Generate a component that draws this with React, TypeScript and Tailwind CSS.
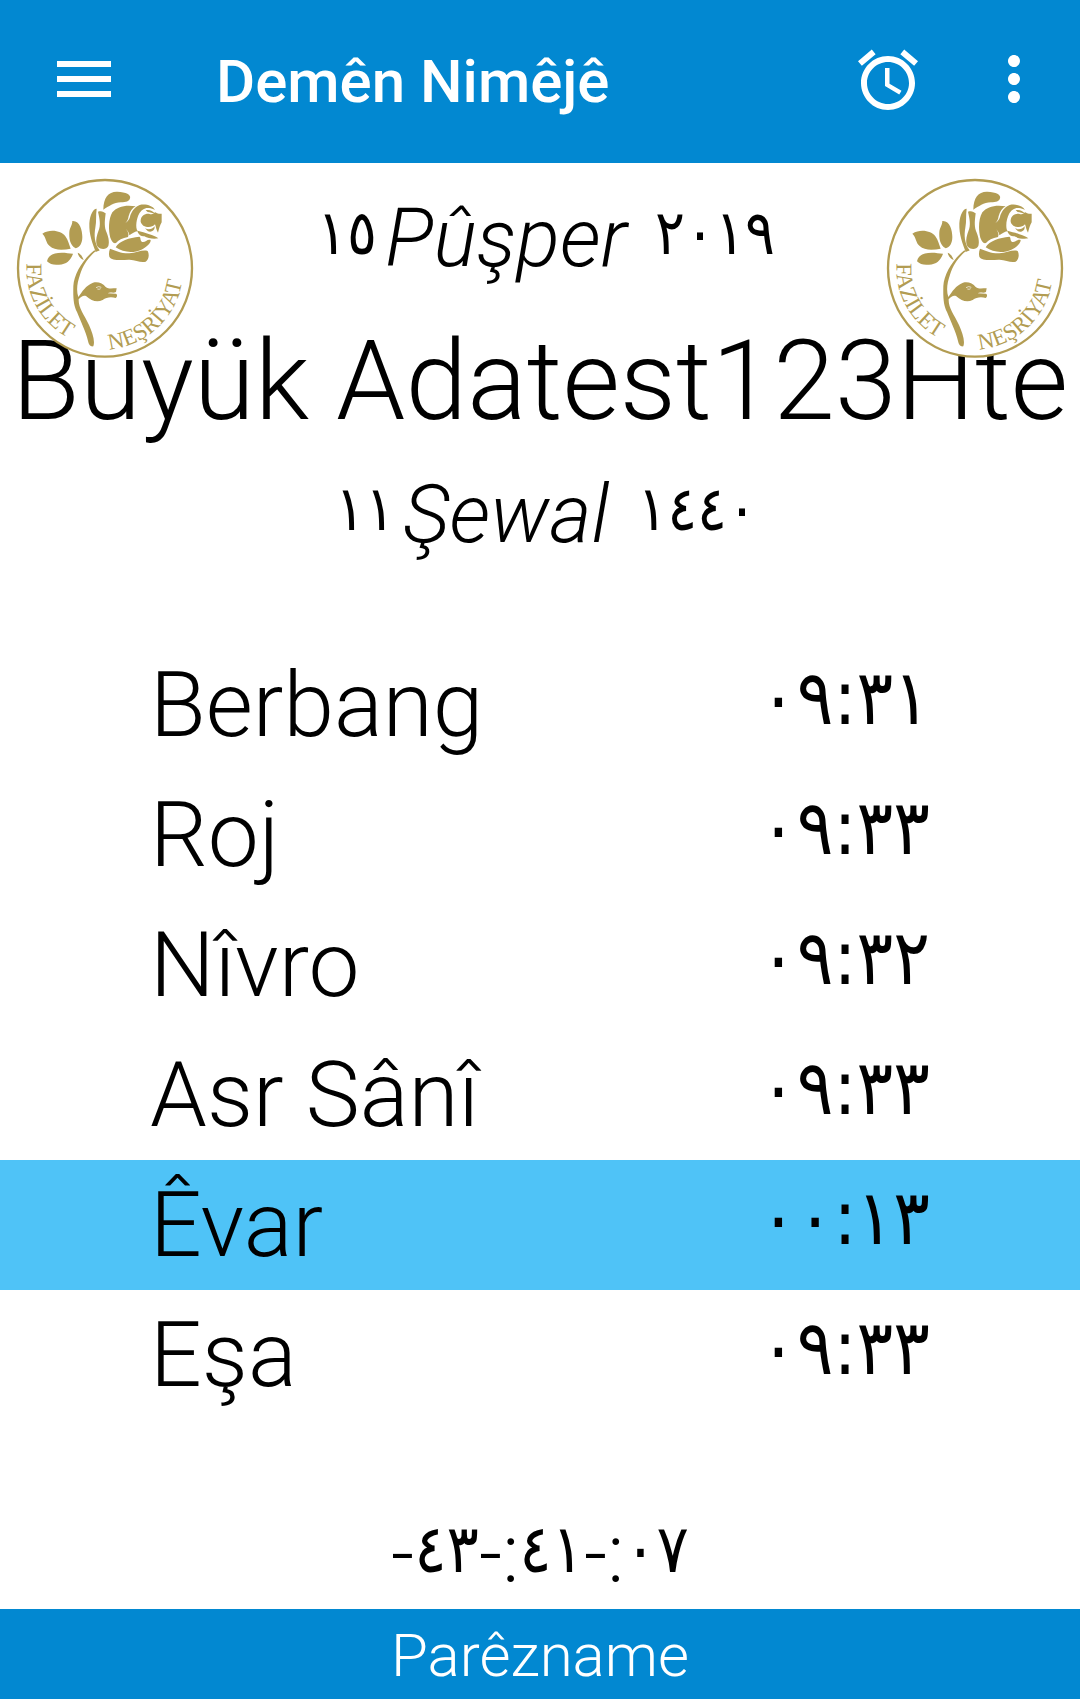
import React from "react";

const prayers = [
  { name: "Berbang", time: "٠٩:٣١" },
  { name: "Roj", time: "٠٩:٣٣" },
  { name: "Nîvro", time: "٠٩:٣٢" },
  { name: "Asr Sânî", time: "٠٩:٣٣" },
  { name: "Êvar", time: "٠٠:١٣", active: true },
  { name: "Eşa", time: "٠٩:٣٣" },
];

const countdown = [
  { sign: "-", value: "٤٣" },
  { sign: "-:", value: "٤١" },
  { sign: "-:", value: "٠٧" },
];

const digits =
  "font-['DejaVu_Sans_Condensed','DejaVu_Sans',sans-serif] not-italic [unicode-bidi:bidi-override] [direction:ltr]";

function Logo({ id }: { id: string }) {
  return (
    <svg viewBox="48 54 534 543" className="h-[181px] w-[178px]" role="img" aria-label="Fazilet Neşriyat">
      <ellipse cx="315" cy="325" rx="261" ry="265" fill="white" stroke="#b29c52" strokeWidth="7" />
      <g fill="#b29c52">
        <path d="M310 149C310 112 326 94 352 95C378 96 394 104 390 115C388 124 378 127 363 127C340 128 327 139 310 149Z" />
        <path d="M290 146C281 145 270 162 268 190C267 225 277 249 287 276C292 274 297 273 299 271C283 250 282 225 286 203C290 184 287 167 290 146Z" />
        <path d="M294 155C304 151 312 156 317 160C315 179 312 195 318 213C325 230 329 244 325 258C320 269 303 269 294 261C285 250 289 230 295 214C303 195 299 177 294 155Z" />
        <path d="M407 139C378 133 350 140 337 157C325 177 325 211 331 233C336 246 342 251 348 249C355 240 367 234 384 231C388 222 383 214 378 207C383 213 388 218 388 226C398 219 406 214 413 214C405 202 410 175 417 162C423 150 435 142 447 144C453 144 460 147 465 150C458 137 437 131 419 135C402 142 397 153 391 166C389 180 380 189 369 192C379 189 385 180 386 168C390 154 397 144 407 139Z" />
        <path d="M422 181C423 167 434 160 447 161C456 166 461 160 466 157C474 162 480 162 485 161L485 187C480 195 477 207 474 218C469 210 468 201 465 193C457 203 441 203 430 197C424 192 421 187 422 181Z" />
        <path d="M437 151C447 147 459 154 465 160C458 160 450 157 443 156Z" />
        <path d="M435 205C447 211 457 207 464 199C465 213 454 217 444 214Z" />
        <path d="M412 212C424 216 436 217 448 223C458 226 468 229 475 235C461 238 443 235 433 229C423 229 415 224 412 212Z" />
        <path d="M347 262C358 242 388 233 418 230C424 233 419 242 427 246C436 248 442 236 452 240C453 249 440 262 424 269C400 280 370 278 347 262Z" />
        <path d="M330 266C347 271 364 281 388 280C410 278 428 268 443 273C449 284 446 299 437 305C421 310 407 298 386 299C360 301 335 302 328 290C326 282 327 273 330 266Z" />
        <path d="M127 221C153 205 185 214 196 229C205 241 207 254 212 266C190 270 163 272 149 258C137 249 139 232 127 221Z" />
        <path d="M217 183C239 181 247 211 247 231C247 250 239 262 227 265C209 255 207 234 208 216C209 203 217 196 217 183Z" />
        <path d="M141 304C145 284 163 278 185 278C198 278 207 280 219 281C213 300 199 314 177 314C162 316 150 313 141 304Z" />
        <path d="M233 278C241 280 246 288 251 300C244 297 235 291 233 278Z" />
        <path d="M283 271C248 298 222 343 220 378C219 415 221 437 231 456C243 487 258 516 264 543C266 555 272 561 280 559C286 543 277 518 267 495C252 463 235 444 236 418C244 408 251 405 258 408C275 423 291 428 308 420C319 411 335 410 347 414C352 410 353 404 348 401L323 400C330 395 341 401 348 396L350 385C336 385 326 388 317 381C309 370 294 364 279 368C257 377 247 394 235 411C228 390 232 367 240 344C250 314 264 293 287 274Z" />
      </g>
      <path d="M288 383Q296 377 304 382M292 387Q298 389 302 386" fill="none" stroke="white" strokeWidth="2" />
      <path id={`${id}-left`} d="M80 310A236 236 0 0 0 315 561" fill="none" />
      <path id={`${id}-right`} d="M328 568A240 240 0 0 0 548 315" fill="none" />
      <g fill="#b29c52" fontFamily="Liberation Serif, serif" fontWeight="400">
        <text fontSize="68"><textPath href={`#${id}-left`}>FAZİLET</textPath></text>
        <text fontSize="68"><textPath href={`#${id}-right`}>NEŞRİYAT</textPath></text>
      </g>
    </svg>
  );
}

function DateLine({ day, month, year }: { day: string; month: string; year: string }) {
  return (
    <p className="flex items-start pl-3 italic">
      <span className={`${digits} mr-2 text-[62px] leading-[84px] font-normal`}>{day}</span>
      {month}
      <span className={`${digits} ml-7 text-[62px] leading-[84px] font-normal`}>{year}</span>
    </p>
  );
}

export default function App() {
  return (
    <div className="flex min-h-screen flex-col bg-white font-['Roboto',sans-serif] font-light text-black">
      <header className="flex h-[163px] items-center bg-[#0288d1] pr-[30px] pl-12 text-white">
        <button aria-label="Menu" className="mb-1.5">
          <svg viewBox="0 0 24 24" className="size-[72px] fill-current"><path d="M3 18h18v-2H3v2zm0-5h18v-2H3v2zm0-7v2h18V6H3z" /></svg>
        </button>
        <h1 className="ml-24 flex-1 text-[60px] font-medium">Demên Nimêjê</h1>
        <button aria-label="Alarm" className="mr-[54px] mb-1">
          <svg viewBox="0 0 24 24" className="size-[72px] fill-current"><path d="M22 5.72l-4.6-3.86-1.29 1.53 4.6 3.86L22 5.72zM7.88 3.39L6.6 1.86 2 5.71l1.29 1.53 4.59-3.85zM12.5 8H11v6l4.75 2.85.75-1.23-4-2.37V8zM12 4c-4.97 0-9 4.03-9 9s4.02 9 9 9c4.97 0 9-4.03 9-9s-4.03-9-9-9zm0 16c-3.87 0-7-3.13-7-7s3.13-7 7-7 7 3.13 7 7-3.13 7-7 7z" /></svg>
        </button>
        <button aria-label="More options" className="mb-1.5">
          <svg viewBox="0 0 24 24" className="size-[72px] fill-current"><path d="M12 8c1.1 0 2-.9 2-2s-.9-2-2-2-2 .9-2 2 .9 2 2 2zm0 2c-1.1 0-2 .9-2 2s.9 2 2 2 2-.9 2-2-.9-2-2-2zm0 6c-1.1 0-2 .9-2 2s.9 2 2 2 2-.9 2-2-.9-2-2-2z" /></svg>
        </button>
      </header>

      <main className="flex flex-1 flex-col">
        <section className="relative flex flex-col items-center pt-7 text-[81px] leading-[96px] whitespace-nowrap">
          <DateLine day="١٥" month="Pûşper" year="٢٠١٩" />
          <h2 className="mt-7 mb-5 text-[111px] leading-[132px]">Büyük Adatest123Hte</h2>
          <DateLine day="١١" month="Şewal" year="١٤٤٠" />
          <div className="absolute top-[15px] left-4"><Logo id="start" /></div>
          <div className="absolute top-[15px] right-4"><Logo id="end" /></div>
        </section>

        <table className="mt-[77px] w-full text-[91px] leading-[130px]">
          <tbody>
            {prayers.map((p) => (
              <tr key={p.name} className={p.active ? "bg-[#4fc3f7]" : ""}>
                <th scope="row" className="p-0 pl-[150px] text-left font-light">{p.name}</th>
                <td className={`${digits} p-0 pr-[150px] pb-3.5 text-right text-[76px] leading-[116px] font-normal`}>
                  {p.time}
                </td>
              </tr>
            ))}
          </tbody>
        </table>

        <p className="flex flex-1 items-end justify-center pb-1.5 text-[81px] leading-[96px]">
          {countdown.map((part) => (
            <span key={part.value} className="flex items-start">
              {part.sign}
              <span className={`${digits} text-[67px] leading-[84px] font-normal`}>{part.value}</span>
            </span>
          ))}
        </p>
      </main>

      <footer>
        <button className="w-full bg-[#0288d1] pt-1 text-[60px] leading-[86px] font-light text-white">Parêzname</button>
      </footer>
    </div>
  );
}
